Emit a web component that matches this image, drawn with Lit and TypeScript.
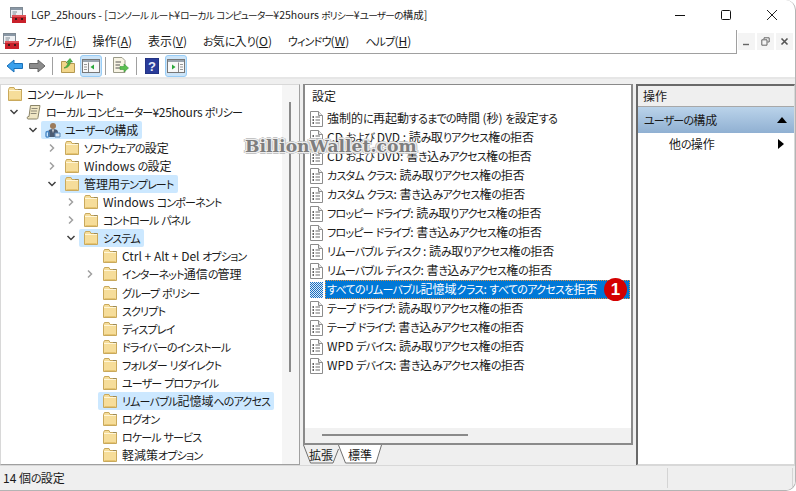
import { LitElement, html, css } from "lit";
import { customElement } from "lit/decorators.js";

const t = (s: string) =>
  s.split(/([\u3040-\u30ff]+)/).map((p, i) => (i % 2 ? html`<span class="k">${p}</span>` : p));

const folder = html`<svg class="ic" width="16" height="16" viewBox="0 0 16 16"><path d="M1.5 3.5V14.5H14.5V3.5H8L7 1.5H2.5Z" fill="#f6dd9a" stroke="#c9a95c"/><path d="M2 4.5H14" stroke="#fff6d8"/><path d="M11 3.5H14.5" stroke="#9a8a5c"/><path d="M2.5 13.5H13.5" stroke="#e6c470"/></svg>`;
const scroll = html`<svg class="ic" width="16" height="16" viewBox="0 0 16 16"><path d="M4.5 1.5H14L12 13.5C12 15 11 15 10 15H2C1 15 .8 13 2 12.5H3Z" fill="#efe6c4" stroke="#8a8468"/><path d="M5.5 4.5H11.5M5 7H11M4.7 9.5H10.5" stroke="#8f8a78"/></svg>`;
const user = html`<svg class="ic" width="16" height="16" viewBox="0 0 16 16"><circle cx="8" cy="4" r="3" fill="#9b7b5c"/><path d="M3 15V10C3 8 5 7 8 7S13 8 13 10V15Z" fill="#4c5c74"/><path d="M7 7.5H9L8 11Z" fill="#e8e8e8"/><path d="M1 11C1 9 4 9 4 11V14C4 15.5 1 15.5 1 14Z" fill="none" stroke="#4a8ac8" stroke-width="1.4"/><path d="M10 11H15V15H10Z" fill="#dfe8f2" stroke="#5a88b8"/></svg>`;
const doc = html`<svg class="ic" width="13" height="16" viewBox="0 0 13 16"><path d="M.5 .5H8.5L12.5 4.5V15.5H.5Z" fill="#fff" stroke="#8c8c8c"/><path d="M8.5 .5V4.5H12.5" fill="#e8e8e8" stroke="#8c8c8c"/><path d="M2.5 6H4M2.5 9H4M2.5 12H4" stroke="#333" stroke-width="1.6"/><path d="M5.5 6H10M5.5 9H10M5.5 12H10" stroke="#6a6a6a"/></svg>`;
const docSel = html`<svg class="ic" width="13" height="16" viewBox="0 0 13 16"><defs><pattern id="chk" width="2" height="2" patternUnits="userSpaceOnUse"><rect width="2" height="2" fill="#dbeaf8"/><rect width="1" height="1" fill="#1a6fc0"/><rect x="1" y="1" width="1" height="1" fill="#1a6fc0"/></pattern></defs><rect width="13" height="16" fill="url(#chk)"/></svg>`;
const chevD = html`<svg class="chev" width="10" height="10" viewBox="0 0 10 10"><path d="M1.5 3L5 6.5L8.5 3" fill="none" stroke="#404040" stroke-width="1.5"/></svg>`;
const chevR = html`<svg class="chev" width="10" height="10" viewBox="0 0 10 10"><path d="M3 1.5L6.5 5L3 8.5" fill="none" stroke="#a0a0a0" stroke-width="1.5"/></svg>`;
const toolbox = html`<svg width="16" height="16" viewBox="0 0 16 16"><rect x=".5" y=".5" width="12" height="10" fill="#eef1f4" stroke="#7f8a94"/><rect x="1" y="1" width="11" height="2" fill="#8a98a6"/><path d="M2.5 5H7M2.5 7H6" stroke="#7f8a94"/><rect x="2" y="8" width="14" height="8" fill="#c8202a"/><rect x="2" y="8" width="14" height="2" fill="#e0555a"/><rect x="5" y="11" width="2" height="2" fill="#3a1a1a"/><rect x="11" y="11" width="2" height="2" fill="#3a1a1a"/></svg>`;

type Node = { d: number; icon: any; t: string; c?: "d" | "r"; sel?: boolean; sp?: number };
const tree: Node[] = [
  { d: 0, icon: folder, t: "コンソール ルート" },
  { d: 1, icon: scroll, t: "ローカル コンピューター¥25hours ポリシー", c: "d", sp: -0.27 },
  { d: 2, icon: user, t: "ユーザーの構成", c: "d", sel: true },
  { d: 3, icon: folder, t: "ソフトウェアの設定", c: "r" },
  { d: 3, icon: folder, t: "Windows の設定", c: "r" },
  { d: 3, icon: folder, t: "管理用テンプレート", c: "d", sel: true },
  { d: 4, icon: folder, t: "Windows コンポーネント", c: "r" },
  { d: 4, icon: folder, t: "コントロール パネル", c: "r" },
  { d: 4, icon: folder, t: "システム", c: "d", sel: true },
  { d: 5, icon: folder, t: "Ctrl + Alt + Del オプション" },
  { d: 5, icon: folder, t: "インターネット通信の管理", c: "r" },
  { d: 5, icon: folder, t: "グループ ポリシー" },
  { d: 5, icon: folder, t: "スクリプト" },
  { d: 5, icon: folder, t: "ディスプレイ" },
  { d: 5, icon: folder, t: "ドライバーのインストール" },
  { d: 5, icon: folder, t: "フォルダー リダイレクト" },
  { d: 5, icon: folder, t: "ユーザー プロファイル" },
  { d: 5, icon: folder, t: "リムーバブル記憶域へのアクセス", sel: true },
  { d: 5, icon: folder, t: "ログオン" },
  { d: 5, icon: folder, t: "ロケール サービス" },
  { d: 5, icon: folder, t: "軽減策オプション" },
];
const items = [
  "強制的に再起動するまでの時間 (秒) を設定する",
  "CD および DVD : 読み取りアクセス権の拒否",
  "CD および DVD: 書き込みアクセス権の拒否",
  "カスタム クラス: 読み取りアクセス権の拒否",
  "カスタム クラス: 書き込みアクセス権の拒否",
  "フロッピー ドライブ: 読み取りアクセス権の拒否",
  "フロッピー ドライブ: 書き込みアクセス権の拒否",
  "リムーバブル ディスク : 読み取りアクセス権の拒否",
  "リムーバブル ディスク: 書き込みアクセス権の拒否",
  "すべてのリムーバブル記憶域クラス: すべてのアクセスを拒否",
  "テープ ドライブ: 読み取りアクセス権の拒否",
  "テープ ドライブ: 書き込みアクセス権の拒否",
  "WPD デバイス: 読み取りアクセス権の拒否",
  "WPD デバイス: 書き込みアクセス権の拒否",
];
const menus: [string, string][] = [["ファイル", "F"], ["操作", "A"], ["表示", "V"], ["お気に入り", "O"], ["ウィンドウ", "W"], ["ヘルプ", "H"]];

@customElement("app-root")
export class AppRoot extends LitElement {
  static styles = css`
    :host { display: block; width: 796px; height: 491px; overflow: hidden; background: #fff;
      font: 12px/16px "Noto Sans CJK JP", "Noto Sans", sans-serif; font-feature-settings: "palt"; color: #1a1a1a; }
    .k { font-size: .917em; letter-spacing: -.075em; }
    .win { position: relative; width: 796px; height: 491px; box-sizing: border-box; display: flex; flex-direction: column;
      border-right: 1px solid #b4b4b4; border-bottom: 1px solid #b4b4b4; border-radius: 0 10px 10px 0; overflow: hidden; background: #fff; }
    .title { height: 30px; display: flex; align-items: center; padding: 0 0 0 10px; gap: 5px; flex: none; font-size: 10.5px; }
    .title .name { flex: 1; white-space: nowrap; }
    .wb { width: 46px; height: 30px; display: flex; align-items: center; justify-content: center; }
    .wbs { display: flex; margin-left: -5px; }
    .menubar { height: 24px; display: flex; flex: none; }
    .menus { flex: 1; display: flex; align-items: center; padding: 0 0 2px 3px; border-bottom: 1px solid #a0a0a0; border-right: 1px solid #a0a0a0; gap: 16px; }
    .menus .m { white-space: nowrap; }
    .menus .first { margin-left: -8px; }
    .mdi { width: 58px; display: flex; gap: 2px; padding: 3px 2px 0 1px; box-sizing: border-box; }
    .mdi div { width: 17px; height: 17px; background: #f4f4f4; display: flex; align-items: center; justify-content: center; }
    .toolbar { height: 23px; flex: none; display: flex; align-items: center; padding-left: 4px; border-bottom: 2px solid #e6e6e6; }
    .tb { width: 22px; height: 22px; box-sizing: border-box; display: flex; align-items: center; justify-content: center; }
    .tb.on { background: #cce4f8; border: 1px solid #99cdf6; border-radius: 3px; margin-left: 1px; margin-right: -1px; }
    .tb.on.last { margin-left: 2px; }
    .sep { width: 1px; height: 18px; background: #a0a0a0; margin: 0 4px; }
    .main { flex: 1; min-height: 0; display: flex; gap: 3px; background: #efefef; padding-top: 5px; }
    .tree-pane { width: 300px; background: #fff; border: 1px solid #a0a0a0; border-top: 1px solid #d8d8d8; border-left: 1px solid #d8d8d8; box-sizing: border-box; display: flex; flex: none; }
    .tree { flex: 1; overflow: hidden; }
    .row { height: 18.05px; display: flex; align-items: center; white-space: nowrap; }
    .row .box { display: flex; align-items: center; gap: 4px; height: 18px; padding: 0 4px 0 4px; border-radius: 2px; margin-left: 2px; }
    .row .box.sel { background: #cce8ff; }
    .slot { width: 12px; flex: none; display: flex; justify-content: center; margin-left: -12px; }
    .ic { flex: none; display: block; }
    .scroll { width: 17px; background: #f5f5f5; flex: none; position: relative; }
    .scroll .thumb { position: absolute; left: 7px; top: 17px; width: 2px; height: 270px; background: #8a8a8a; }
    .center { width: 330px; flex: none; display: flex; flex-direction: column; }
    .list-pane { flex: 1; min-height: 0; border: 1px solid #8a8a8a; border-width: 1px 2px 2px 2px; background: #fff; display: flex; flex-direction: column; }
    .hd { height: 24px; padding: 3px 0 0 7px; box-sizing: border-box; flex: none; }
    .items { flex: 1; min-height: 0; padding-left: 5px; }
    .it { height: 19px; display: flex; align-items: center; gap: 2px; white-space: nowrap; position: relative; }
    .it .tx { height: 19px; line-height: 18px; padding-left: 2px; flex: 1; margin-right: 1px; }
    .it .tx .k { letter-spacing: -.068em; }
    .it.sel .tx { background: #0078d7; color: #fff; outline: 1px dotted #e09040; outline-offset: -1px; }
    .badge { position: absolute; left: 294px; top: -2px; width: 23px; height: 23px; border-radius: 50%; background: #d40000; color: #fff; font: bold 17px/23px "Liberation Sans", sans-serif; text-align: center; }
    .hs { height: 15px; background: #f1f1f1; flex: none; position: relative; }
    .hs i { position: absolute; left: 17px; top: 6px; width: 146px; height: 2px; background: #8a8a8a; }
    .tabs { height: 20px; flex: none; display: flex; }
    .tab { position: relative; height: 19px; display: flex; justify-content: center; align-items: center; }
    .tab.a { width: 36px; }
    .tab.b { width: 44px; margin-left: -1px; }
    .tab svg { position: absolute; inset: 0; }
    .tab span { position: relative; }
    .right { width: 159px; height: 382px; flex: none; background: #fff; box-sizing: border-box; border: 1px solid #696969; border-width: 2px 1px 2px 2px; border-right-color: #d8d8d8; border-bottom-color: #d8d8d8; }
    .ah { height: 20px; background: #efefef; border-bottom: 1px solid #a8a8a8; padding-left: 5px; line-height: 19px; }
    .ag { height: 26px; background: linear-gradient(#bad3ea, #90b0d2); display: flex; align-items: center; justify-content: space-between; padding: 0 7px 0 6px; }
    .ao { height: 22px; display: flex; align-items: center; justify-content: space-between; padding: 0 10px 0 31px; }
    .status { height: 24px; flex: none; background: #efefef; display: flex; align-items: center; padding-left: 3px; border-top: 1px solid #d8d8d8; position: relative; }
    .status .d1 { position: absolute; left: 667px; top: 2px; bottom: 2px; width: 1px; background: #d4d4d4; }
    .status .d2 { position: absolute; left: 792px; top: 2px; bottom: 2px; width: 1px; background: #d4d4d4; }
    .wm { position: absolute; left: 245px; top: 136px; font: bold 17.2px/20px "DejaVu Serif", serif; color: #7e7e7e; white-space: nowrap;
      text-shadow: 1px 0 #eee, -1px 0 #eee, 0 1px #eee, 0 -1px #eee, 1px 1px #eee, -1px -1px #eee, 1px -1px #eee, -1px 1px #eee, 2px 0 #c4c4c4, -2px 0 #c4c4c4, 0 2px #c4c4c4, 0 -2px #c4c4c4, 2px 1px #c4c4c4, -2px 1px #c4c4c4, 2px -1px #c4c4c4, -2px -1px #c4c4c4; }
  `;

  render() {
    return html`<div class="win">
      <div class="title">
        ${toolbox}
        <div class="name">${t("LGP_25hours - [コンソール ルート¥ローカル コンピューター¥25hours ポリシー¥ユーザーの構成]")}</div>
        <div class="wbs">
          <div class="wb"><svg width="12" height="12" viewBox="0 0 12 12"><path d="M1 6.5H11" stroke="#111"/></svg></div>
          <div class="wb"><svg width="12" height="12" viewBox="0 0 12 12"><rect x="1.5" y="1.5" width="9" height="9" rx="1" fill="none" stroke="#111"/></svg></div>
          <div class="wb"><svg width="12" height="12" viewBox="0 0 12 12"><path d="M1 1L11 11M11 1L1 11" stroke="#222"/></svg></div>
        </div>
      </div>
      <div class="menubar">
        <div class="menus">
          ${toolbox}
          ${menus.map(([m, k], i) => html`<span class="m ${i === 0 ? "first" : ""}">${t(m)}(<u>${k}</u>)</span>`)}
        </div>
        <div class="mdi">
          <div><svg width="9" height="9" viewBox="0 0 9 9"><path d="M1 7.5H7" stroke="#666" stroke-width="1.4"/></svg></div>
          <div><svg width="9" height="9" viewBox="0 0 9 9"><path d="M3 2V.8H8.2V5H6.5M.8 2.8H6V8.2H.8Z" fill="none" stroke="#666"/></svg></div>
          <div><svg width="9" height="9" viewBox="0 0 9 9"><path d="M1.5 1.5L7.5 7.5M7.5 1.5L1.5 7.5" stroke="#555" stroke-width="1.6"/></svg></div>
        </div>
      </div>
      <div class="toolbar">
        <div class="tb"><svg width="18" height="16" viewBox="0 0 18 16"><path d="M1 8L8 2V5.5H16.5V10.5H8V14Z" fill="#3aa0ec" stroke="#1a70b8"/></svg></div>
        <div class="tb"><svg width="18" height="16" viewBox="0 0 18 16"><path d="M17 8L10 2V5.5H1.5V10.5H10V14Z" fill="#8c8c8c" stroke="#666"/></svg></div>
        <div class="sep"></div>
        <div class="tb"><svg width="16" height="16" viewBox="0 0 16 16"><path d="M1.5 3.5V14.5H14.5V5.5H7L6 3.5Z" fill="#f2d68a" stroke="#b49850"/><path d="M4 10C6 9 8 7 8.5 4L6.5 4.5L10 .5L12.5 4L10.5 4C10 7 8 10 4 10Z" fill="#50b848" stroke="#2e8a2e" stroke-width=".6"/></svg></div>
        <div class="tb on"><svg width="18" height="16" viewBox="0 0 18 16"><rect x=".5" y="1.5" width="17" height="13" fill="#f8f8f8" stroke="#777"/><rect x="1" y="2" width="16" height="2" fill="#9aa4ae"/><path d="M6.5 4.5V14" stroke="#888"/><path d="M2 6.5H5M2 9H5M2 11.5H5" stroke="#999"/><path d="M12 6.5L8.5 9L12 11.5Z" fill="#2aa83a"/></svg></div>
        <div class="sep"></div>
        <div class="tb"><svg width="18" height="17" viewBox="0 0 18 17"><path d="M1.5 .5H10L13 3.5V15.5H1.5Z" fill="#f8f4e4" stroke="#9a9a88"/><path d="M3.5 5H9M3.5 8H8M3.5 11H8" stroke="#555"/><path d="M8 9.5H12V7L16.5 11L12 15V12.5H8Z" fill="#5ac050" stroke="#3a983a" stroke-width=".6"/></svg></div>
        <div class="sep"></div>
        <div class="tb"><svg width="14" height="16" viewBox="0 0 14 16"><rect width="14" height="16" fill="#2a3c9a"/><rect width="14" height="16" fill="none" stroke="#1a2a70"/><text x="7" y="13" text-anchor="middle" font-family="Liberation Sans" font-weight="bold" font-size="13" fill="#e8ecf8">?</text></svg></div>
        <div class="tb on last"><svg width="18" height="16" viewBox="0 0 18 16"><rect x=".5" y="1.5" width="17" height="13" fill="#f8f8f8" stroke="#777"/><rect x="1" y="2" width="16" height="2" fill="#9aa4ae"/><path d="M11.5 4.5V14" stroke="#888"/><path d="M13 6.5H16M13 9H16M13 11.5H16" stroke="#999"/><path d="M5 6.5L8.5 9L5 11.5Z" fill="#2aa83a"/></svg></div>
      </div>
      <div class="main">
        <div class="tree-pane">
          <div class="tree">
            ${tree.map(
              (n) => html`<div class="row" style="padding-left:${n.d * 19}px">
                ${n.d > 0 ? html`<span class="slot">${n.c === "d" ? chevD : n.c === "r" ? chevR : ""}</span>` : ""}
                <span class="box ${n.sel ? "sel" : ""}">${n.icon}<span style="${n.sp ? `letter-spacing:${n.sp}px` : ""}">${t(n.t)}</span></span>
              </div>`
            )}
          </div>
          <div class="scroll"><div class="thumb"></div></div>
        </div>
        <div class="center">
          <div class="list-pane">
            <div class="hd">設定</div>
            <div class="items">
              ${items.map(
                (s, i) => html`<div class="it ${i === 9 ? "sel" : ""}">${i === 9 ? docSel : doc}<span class="tx">${t(s)}</span>${i === 9 ? html`<span class="badge">1</span>` : ""}</div>`
              )}
            </div>
            <div class="hs"><i></i></div>
          </div>
          <div class="tabs">
            <div class="tab a"><svg width="36" height="19" viewBox="0 0 36 19"><path d="M.5 0L7.5 18H30L35.5 4" fill="#efefef" stroke="#707070"/></svg><span>拡張</span></div>
            <div class="tab b"><svg width="44" height="19" viewBox="0 0 44 19"><path d="M.5 0L7.5 18H38L43.5 0" fill="#fff" stroke="#707070"/></svg><span>標準</span></div>
          </div>
        </div>
        <div class="right">
          <div class="ah">操作</div>
          <div class="ag"><span>${t("ユーザーの構成")}</span><svg width="10" height="6" viewBox="0 0 10 6"><path d="M5 0L10 6H0Z" fill="#000"/></svg></div>
          <div class="ao"><span>${t("他の操作")}</span><svg width="6" height="10" viewBox="0 0 6 10"><path d="M0 0L6 5L0 10Z" fill="#000"/></svg></div>
        </div>
      </div>
      <div class="status">${t("14 個の設定")}<div class="d1"></div><div class="d2"></div></div>
      <div class="wm">BillionWallet.com</div>
    </div>`;
  }
}
